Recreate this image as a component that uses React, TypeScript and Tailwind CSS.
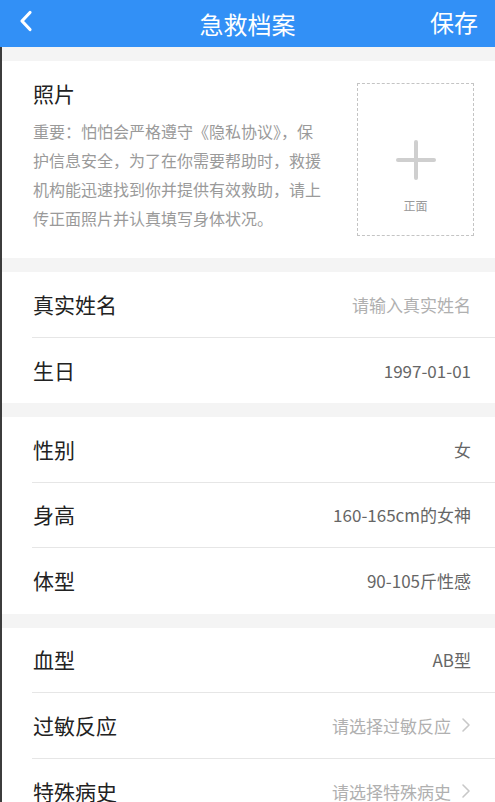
const FONT = { fontFamily: '"Noto Sans CJK SC", "Noto Sans", sans-serif' };

type Row = { label: string; value: string; placeholder?: boolean; arrow?: boolean };

const groups: Row[][] = [
  [
    { label: '真实姓名', value: '请输入真实姓名', placeholder: true },
    { label: '生日', value: '1997-01-01' },
  ],
  [
    { label: '性别', value: '女' },
    { label: '身高', value: '160-165cm的女神' },
    { label: '体型', value: '90-105斤性感' },
  ],
  [
    { label: '血型', value: 'AB型' },
    { label: '过敏反应', value: '请选择过敏反应', placeholder: true, arrow: true },
    { label: '特殊病史', value: '请选择特殊病史', placeholder: true, arrow: true },
  ],
];

function Chevron() {
  return (
    <svg width="10" height="16" viewBox="0 0 10 16" className="ml-[10px] shrink-0">
      <polyline points="2,2 8,8 2,14" fill="none" stroke="#c8c8c8" strokeWidth="1.6" strokeLinecap="round" strokeLinejoin="round" />
    </svg>
  );
}

export default function App() {
  return (
    <div className="flex min-h-[802px] w-[495px] flex-col overflow-hidden bg-[#f4f4f4]" style={FONT}>
      <header className="relative flex h-[47px] shrink-0 items-center justify-center bg-[#3290f6] text-white">
        <svg width="16" height="22" viewBox="0 0 16 22" className="absolute left-[18px] top-[10px]">
          <polyline points="12,2.5 4,11 12,19.5" fill="none" stroke="#fff" strokeWidth="3.2" strokeLinecap="round" strokeLinejoin="round" />
        </svg>
        <h1 className="text-[24px] leading-none font-normal">急救档案</h1>
        <span className="absolute right-[17px] top-[10px] text-[24px] leading-none">保存</span>
      </header>

      <div className="flex flex-1 flex-col border-l-[2px] border-[#3c3c3c]">
        <div className="h-[14px] shrink-0" />

        <section className="flex justify-between bg-white pb-[22px] pl-[31px] pr-[21px] pt-[18px]">
          <div className="w-[292px]">
            <h2 className="text-[21px] leading-[28px] text-[#222]">照片</h2>
            <p className="mt-[10px] text-[16px] leading-[29px] text-[#9a9a9a]">
              重要：怕怕会严格遵守《隐私协议》，保护信息安全，为了在你需要帮助时，救援机构能迅速找到你并提供有效救助，请上传正面照片并认真填写身体状况。
            </p>
          </div>
          <div className="mt-[4px] flex h-[153px] w-[117px] flex-col items-center border border-dashed border-[#c4c4c4]">
            <div className="relative mt-[56px] h-[40px] w-[40px]">
              <div className="absolute left-0 top-[18px] h-[4px] w-[40px] rounded-full bg-[#cfcfcf]" />
              <div className="absolute left-[18px] top-0 h-[40px] w-[4px] rounded-full bg-[#cfcfcf]" />
            </div>
            <span className="mt-[20px] text-[12px] leading-none text-[#999]">正面</span>
          </div>
        </section>

        {groups.map((rows, gi) => (
          <div key={gi} className="mt-[14px] bg-white pl-[30px]">
            {rows.map((r, i) => (
              <div
                key={r.label}
                className={`flex h-[65.5px] items-center justify-between pr-[24px] ${i < rows.length - 1 ? 'border-b border-[#e6e6e6]' : ''}`}
              >
                <span className="pl-[1px] text-[21px] text-[#222]">{r.label}</span>
                <span className="flex items-center">
                  <span className={`text-[17px] ${r.placeholder ? 'text-[#b0b0b0]' : 'text-[#666]'}`}>{r.value}</span>
                  {r.arrow ? <Chevron /> : null}
                </span>
              </div>
            ))}
          </div>
        ))}
      </div>
    </div>
  );
}
